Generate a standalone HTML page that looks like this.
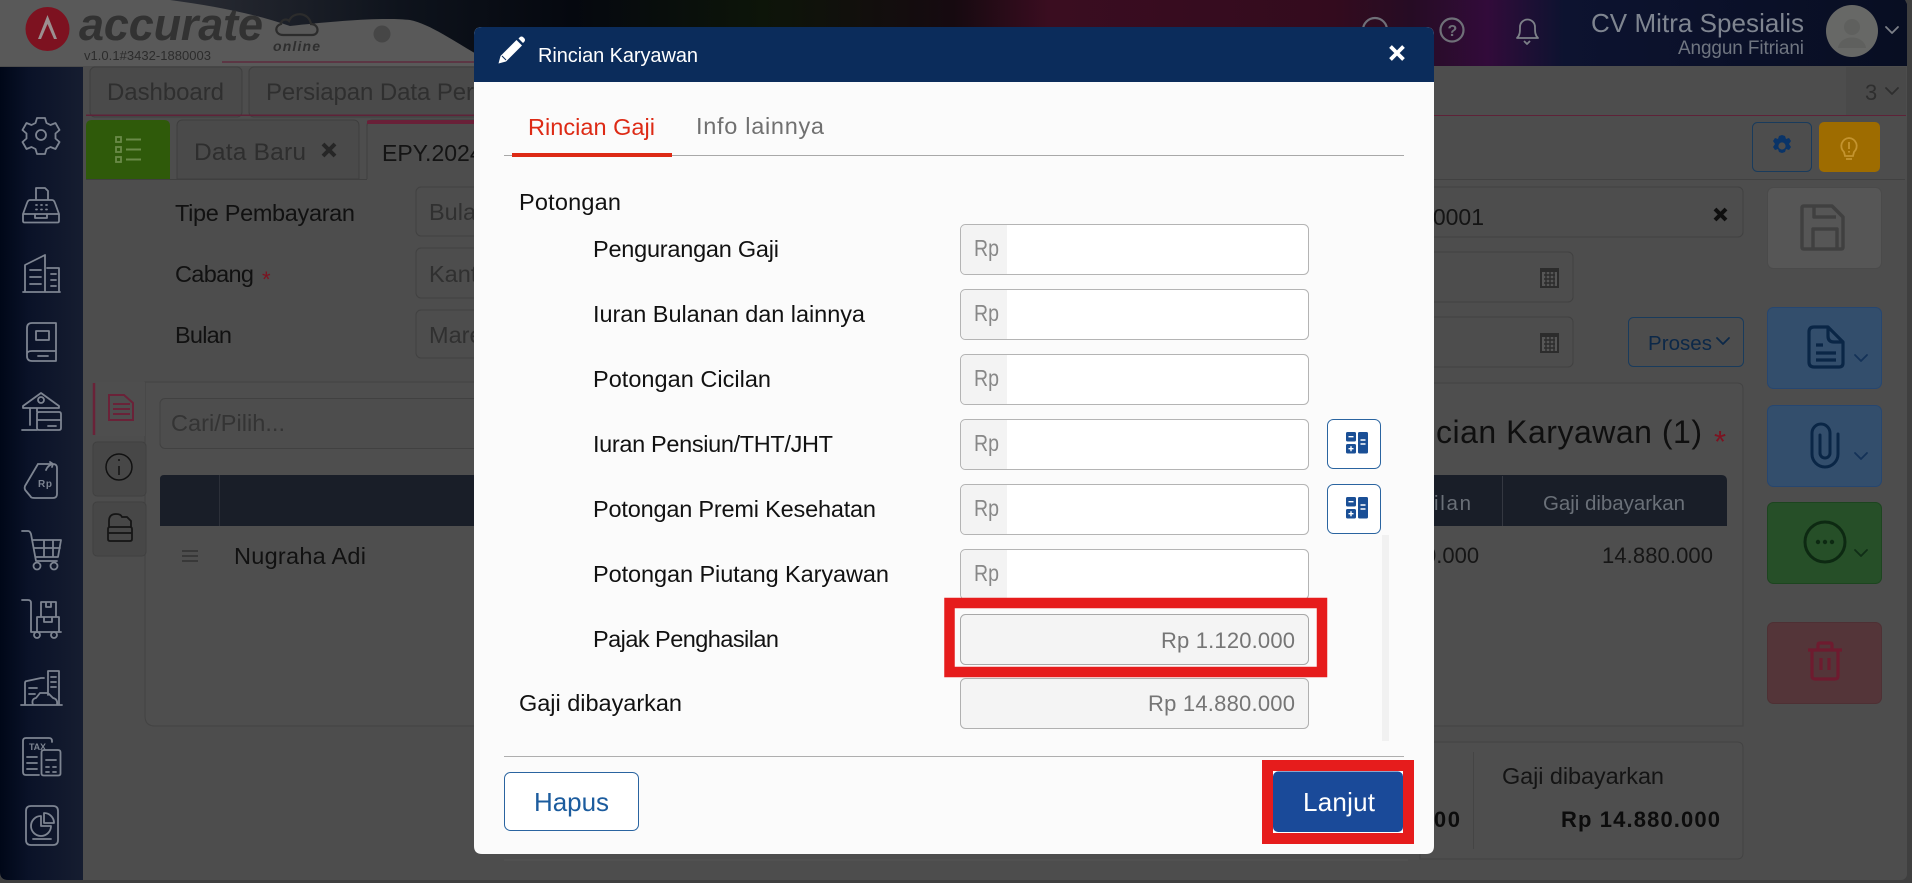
<!DOCTYPE html>
<html><head><meta charset="utf-8"><title>Rincian Karyawan</title>
<style>
html,body{margin:0;padding:0;width:1912px;height:883px;overflow:hidden;background:#3c3c3c}
svg{display:block}
text{font-family:"Liberation Sans",sans-serif;font-size:22px;fill:#1a1a1a}
.l{fill:#111;font-size:23.5px}
.rp{fill:#888;font-size:23px}
.ic{fill:none;stroke:#7d8491;stroke-width:1.8;stroke-linejoin:round;stroke-linecap:round}
.in{fill:#4d4d4d;stroke:#414141;stroke-width:1}
</style></head><body>
<svg width="1912" height="883" viewBox="0 0 1912 883" xmlns="http://www.w3.org/2000/svg">
<defs>
<linearGradient id="side" x1="0" x2="1" y1="0" y2="0"><stop offset="0" stop-color="#000718"/><stop offset=".35" stop-color="#0a1228"/><stop offset="1" stop-color="#161d30"/></linearGradient>
<linearGradient id="ban" x1="0" x2="1" y1="0" y2="0">
<stop offset="0" stop-color="#3a3c42"/><stop offset=".12" stop-color="#23262e"/><stop offset=".21" stop-color="#0e131c"/><stop offset=".3" stop-color="#05080f"/><stop offset=".4" stop-color="#0d1509"/><stop offset=".5" stop-color="#160a10"/><stop offset=".55" stop-color="#3a0d20"/><stop offset=".7" stop-color="#330b1e"/><stop offset=".74" stop-color="#260c24"/><stop offset=".78" stop-color="#320b3a"/><stop offset=".82" stop-color="#0d1330"/><stop offset="1" stop-color="#080e22"/></linearGradient>
<g id="calc"><rect x="0" y="0" width="10" height="9.5" rx="1.5" fill="#1a4f96"/><rect x="0" y="12" width="10" height="9.5" rx="1.5" fill="#1a4f96"/><rect x="12" y="0" width="10" height="21.5" rx="1.5" fill="#1a4f96"/><path d="M2.5 4.7h5M2.5 16.7h5M5 14.2v5M14.5 8h5M14.5 12h5" stroke="#fff" stroke-width="1.4" fill="none"/></g>
<path id="chev" d="M-6 -3l6 6 6-6" fill="none" stroke-width="1.8" stroke-linecap="round" stroke-linejoin="round"/>
</defs>

<!-- page base -->
<rect width="1912" height="883" fill="#3f3f3f"/>
<rect x="0" y="0" width="1907" height="880" rx="6" fill="#4d4d4d"/>

<!-- banner -->
<path d="M0 0H1905l2 4V66H0z" fill="url(#ban)"/>
<path d="M0 0H170C215 6 255 14 290 26C335 21 385 17 410 20C430 24 455 42 480 56L480 66H0z" fill="#595959"/>
<path d="M222 62H474" stroke="#5e2238" stroke-width="1.2"/>
<circle cx="382" cy="34" r="8.5" fill="#464646"/>
<!-- logo -->
<circle cx="47.5" cy="29" r="22" fill="#7d1220"/>
<path d="M38 39L47.5 15L57 39l-3 0-6.500-15-6.500 15z" fill="#9b9090"/>
<text x="79" y="40" textLength="184" style="font-size:45px;font-weight:bold;font-style:italic;fill:#323232">accurate</text>
<path d="M283 35c-8 0-9-9-2-11 0-4 5-6 8-3 4-10 20-9 22 3 8 0 9 11 1 11z" fill="none" stroke="#2c2c2c" stroke-width="2.2"/>
<text x="273" y="51" textLength="47" style="font-size:14px;font-weight:bold;font-style:italic;fill:#2f2f2f">online</text>
<text x="84" y="60" textLength="127" style="font-size:13px;fill:#2c2c2c">v1.0.1#3432-1880003</text>
<!-- banner right -->
<circle cx="1375" cy="30" r="12" fill="none" stroke="#6f7078" stroke-width="2.2"/>
<circle cx="1452" cy="30" r="11.5" fill="none" stroke="#6f7078" stroke-width="2.2"/>
<text x="1447.5" y="36" textLength="9" style="font-size:16px;font-weight:bold;fill:#6f7078">?</text>
<path d="M1517 38c3-3 3-6 3-11a7.500 7.500 0 0 1 15 0c0 5 0 8 3 11zM1524 41l3 3 3-3" fill="none" stroke="#7d8088" stroke-width="1.8" stroke-linejoin="round"/>
<text x="1591" y="32" textLength="213" style="font-size:26px;fill:#7f8590">CV Mitra Spesialis</text>
<text x="1678" y="54" textLength="126" style="font-size:19px;fill:#6f7580">Anggun Fitriani</text>
<circle cx="1852" cy="31" r="26" fill="#676866"/>
<circle cx="1852" cy="27" r="8" fill="#5f605e"/><path d="M1838 48c2-14 26-14 28 0z" fill="#5f605e"/>
<use href="#chev" x="1892" y="30" stroke="#7d8088"/>

<!-- sidebar -->
<path d="M0 67H83V880H8q-8 0-8-8z" fill="url(#side)"/>
<g class="ic">
<!-- gear -->
<path d="M37 118h8l1.500 5 4 2 5-2 4 7-4 3.500v5l4 3.500-4 7-5-2-4 2-1.500 5h-8l-1.500-5-4-2-5 2-4-7 4-3.500v-5l-4-3.500 4-7 5 2 4-2z"/><circle cx="41" cy="135" r="5"/>
<!-- fax -->
<path d="M36 200V188h9l3 3v9M30 200h22q2 0 3 3l4 11H23l4-11q1-3 3-3zM23 214h36v7q0 1.500-1.500 1.500h-33Q23 222.500 23 221zM35 214v4h12v-4M36 205h1M41 205h1M46 205h1M36 209.500h1M41 209.500h1M46 209.500h1"/>
<!-- building -->
<path d="M25 292V265l20-10v37M23 292h37M47 268h12v24M30 270h11M30 277h11M30 284h11M51 274h5M51 280h5M51 286h5"/>
<!-- book -->
<path d="M27 328q0-5 5-5h24v38H32q-5 0-5-5zM27 354q0-3 5-3h24M36 331h13v9H36zM38 356h10"/>
<!-- bank -->
<path d="M23 406l18-13 18 13v2H23zM30 408v17M37 408v4M22 430h15M39 412h20q2 0 2 2v14q0 2-2 2H39q-2 0-2-2v-14q0-2 2-2zM37 420h24M48 426h8"/><circle cx="41" cy="400" r="3"/>
<!-- tag rp -->
<path d="M38 464l-13 22q-1 3 1 5l5 6M38 464h15q4 0 4 4v26q0 4-4 4H35q-4 0-4-1M46 470q2-5 7-6M50 462l3 2-1 3"/>
<!-- cart -->
<path d="M22 531h6q2 0 3 3l5 27h21M32 540h29l-3 17H36M44 540v17M53 540v17M34 548h26"/><circle cx="37" cy="566" r="3.500"/><circle cx="54" cy="566" r="3.500"/>
<!-- trolley -->
<path d="M22 600h6q3 0 3 3v29h30M37 617h22v15H37zM41 602h15v15H41zM46 602v5h5v-5M44 617v5h8v-5"/><circle cx="37" cy="635" r="3"/><circle cx="54" cy="635" r="3"/>
<!-- buildings -->
<path d="M21 705h41M25 705v-22q0-2 2-2l14-3h3M48 695v-24h11v34M51 677h5M51 682h5M51 687h5M29 688h8M29 694h6M33 705q-2-6 3-7l4-5h8l5 5q5 1 4 7z"/>
<!-- tax -->
<path d="M52 742v-1q0-3-3-3H26q-3 0-3 3v31q0 3 3 3h13M44 750h14q2.500 0 2.500 2.500v21q0 2-2.500 2H44q-2.500 0-2.500-2v-21q0-2.500 2.500-2.500zM27 757h10M27 763h10M27 769h10M46 760h10M46 767h3M53 767h3M46 772h3M53 772h3"/>
<!-- report -->
<path d="M31 806h22q5 0 5 5v29q0 5-5 5H31q-5 0-5-5V811q0-5 5-5zM33 839h18M41 816a10 10 0 1 0 10 10H41zM44 813a10 10 0 0 1 10 10H44z"/>
</g>
<text x="29" y="750" textLength="17" style="font-size:9px;fill:#7d8491;font-weight:bold">TAX</text>
<text x="38" y="487" textLength="14" style="font-size:10px;fill:#7d8491;font-weight:bold">Rp</text>

<!-- top tabs -->
<rect x="90" y="67" width="152" height="50" rx="5" fill="#4a4a4a" stroke="#3f3f3f"/>
<rect x="249" y="67" width="400" height="50" rx="5" fill="#4a4a4a" stroke="#3f3f3f"/>
<text x="107" y="100" textLength="117" style="fill:#2f2f2f;font-size:24px">Dashboard</text>
<text x="266" y="100" textLength="208" style="fill:#2f2f2f;font-size:24px">Persiapan Data Per</text>
<rect x="1846" y="67" width="60" height="48" fill="#494949"/>
<text x="1865" y="100" textLength="13" style="fill:#2e2e2e;font-size:22px">3</text>
<use href="#chev" x="1892" y="91" stroke="#2e2e2e"/>
<rect x="86" y="114.500" width="388" height="1.500" fill="#5e2238"/>
<rect x="1434" y="115" width="472" height="1" fill="#5e2238"/>

<!-- second tabs -->
<path d="M86 179V126q0-6 6-6h72q6 0 6 6v53z" fill="#2f5a0a"/>
<g fill="none" stroke="#6a8a48" stroke-width="1.8"><rect x="116" y="137" width="5" height="5"/><rect x="116" y="147" width="5" height="5"/><rect x="116" y="157" width="5" height="5"/></g>
<path d="M126 139.500h15M126 149.500h15M126 159.500h15" stroke="#6a8a48" stroke-width="2"/>
<path d="M177 179V126q0-6 6-6h170q6 0 6 6v53z" fill="#4a4a4a" stroke="#3e3e3e"/>
<text x="194" y="160" textLength="112" style="fill:#2e2e2e;font-size:24.5px">Data Baru</text>
<path d="M323 144l12 12M335 144l-12 12" stroke="#262626" stroke-width="4"/>
<path d="M367 179V126q0-6 6-6H480V179" fill="#4d4d4d" stroke="#3e3e3e"/>
<path d="M367 124v-3q0-1 4-1H480v4z" fill="#692038"/>
<text x="382" y="161" style="fill:#141414;font-size:23px">EPY.2024</text>
<path d="M86 179.500H367" stroke="#3f3f3f"/>
<path d="M1434 179.500H1905" stroke="#414141"/>

<!-- form left -->
<text x="175" y="221" textLength="180" class="l">Tipe Pembayaran</text>
<text x="175" y="282" textLength="79" class="l">Cabang</text>
<text x="262" y="287" textLength="9" style="fill:#7d1220;font-size:22px">*</text>
<text x="175" y="343" textLength="57" class="l">Bulan</text>
<rect x="416" y="187" width="100" height="49" rx="5" class="in"/>
<rect x="416" y="248" width="100" height="50" rx="5" class="in"/>
<rect x="416" y="310" width="100" height="48" rx="5" class="in"/>
<text x="429" y="220" style="fill:#303030;font-size:23.5px">Bulanan</text>
<text x="429" y="282" style="fill:#303030;font-size:23.5px">Kantor</text>
<text x="429" y="343" style="fill:#303030;font-size:23.5px">Maret</text>

<!-- left detail panel -->
<path d="M145 382H480V726H155q-10 0-10-10z" fill="#4e4e4e" stroke="#434343"/>
<path d="M93 387q0-5 5-5h47v54H98q-5 0-5-5z" fill="#4e4e4e"/>
<path d="M94 383v52" stroke="#6a2238" stroke-width="2.5"/>
<path d="M109 395h15l9 8v17h-24zM113 404h17M113 409h17M113 414h17" fill="none" stroke="#6a2238" stroke-width="2"/>
<rect x="93" y="442" width="53" height="54" rx="4" fill="#474747" stroke="#404040"/>
<circle cx="119" cy="467" r="13" fill="none" stroke="#111" stroke-width="1.5"/><path d="M119 466v9M119 459v2" stroke="#111" stroke-width="1.5"/>
<rect x="93" y="502" width="53" height="54" rx="4" fill="#474747" stroke="#404040"/>
<path d="M108 539v-10q0-2 2-2h20q2 0 2 2v10q0 2-2 2h-20q-2 0-2-2zM108 533h24M109 527v-6q0-7 7-7 5 0 6 3h5l4 4v6" fill="none" stroke="#151515" stroke-width="1.8"/>
<rect x="160" y="398.500" width="330" height="50" rx="5" class="in"/>
<text x="171" y="431" textLength="114" style="fill:#343434;font-size:23.5px">Cari/Pilih...</text>
<path d="M160 526V479q0-4 4-4H480V526z" fill="#191e28"/>
<path d="M219.500 475V526" stroke="#2c3039"/>
<path d="M182 551h16M182 556h16M182 561h16" stroke="#383838" stroke-width="2"/>
<text x="234" y="564" textLength="132" class="l">Nugraha Adi</text>

<!-- right form -->
<rect x="1380" y="187" width="363" height="50" rx="5" class="in"/>
<rect x="1380" y="252" width="193" height="50" rx="5" class="in"/>
<rect x="1380" y="317" width="193" height="50" rx="5" class="in"/>
<text x="1484" y="225" text-anchor="end" style="fill:#141414;font-size:23px">000001</text>
<path d="M1715 209l11 11M1726 209l-11 11" stroke="#0f0f0f" stroke-width="4"/>
<g>
<rect x="1540" y="268" width="19" height="20" fill="#2c2c2c"/><rect x="1542" y="272" width="15" height="14" fill="#565656"/>
<path d="M1544 275h11M1544 279h11M1544 283h11M1546 272v14M1550 272v14M1554 272v14" stroke="#2c2c2c" stroke-width="1.4"/>
<rect x="1540" y="333" width="19" height="20" fill="#2c2c2c"/><rect x="1542" y="337" width="15" height="14" fill="#565656"/>
<path d="M1544 340h11M1544 344h11M1544 348h11M1546 337v14M1550 337v14M1554 337v14" stroke="#2c2c2c" stroke-width="1.4"/>
</g>
<rect x="1628.500" y="317.500" width="115" height="49" rx="5" fill="#4d4d4d" stroke="#193b5c"/>
<text x="1648" y="350" textLength="64" style="fill:#0c2848;font-size:20.5px">Proses</text>
<use href="#chev" x="1723" y="341" stroke="#0c2848"/>

<!-- top right buttons -->
<rect x="1752.500" y="122.500" width="59" height="49" rx="5" fill="#4d4d4d" stroke="#193b5c"/>
<path d="M1782 135l3 1 1 3 3-1 2 3-2 3 2 3-2 3-3-1-1 3-3 1-3-1-1-3-3 1-2-3 2-3-2-3 2-3 3 1 1-3z" fill="#0a3468"/><circle cx="1782" cy="146" r="3.6" fill="#4d4d4d"/>
<rect x="1819" y="122" width="61" height="50" rx="5" fill="#9e6c00"/>
<path d="M1849 138a8 8 0 0 0-5 14l1 4h8l1-4a8 8 0 0 0-5-14zM1846 159h6M1849 142v7M1849 151v1.500" fill="none" stroke="#c4942f" stroke-width="1.8"/>

<!-- side action buttons -->
<rect x="1767.500" y="187.500" width="114" height="81" rx="6" fill="#565656" stroke="#4a4a4a"/>
<path d="M1804 206h28l11 11v30q0 2-2 2h-37q-2 0-2-2v-39q0-2 2-2zM1814 206v11h22M1813 249v-20h24v20" fill="none" stroke="#404040" stroke-width="3.5" stroke-linejoin="round"/>
<rect x="1767.500" y="307.500" width="114" height="81" rx="6" fill="#334e6c" stroke="#264670"/>
<path d="M1814 327h14l15 15v21q0 4-4 4h-25q-5 0-5-5V332q0-5 5-5zM1828 327v9q0 6 6 6h9M1816 345h7M1816 353h20M1816 360h20" fill="none" stroke="#0a2646" stroke-width="3.2" stroke-linejoin="round"/>
<use href="#chev" x="1861" y="358" stroke="#143258"/>
<rect x="1767.500" y="405.500" width="114" height="81" rx="6" fill="#334e6c" stroke="#264670"/>
<path d="M1838 434v20a13 13 0 0 1-26 0v-21a9 9 0 0 1 18 0v20a5 5 0 0 1-10 0v-18" fill="none" stroke="#0a2646" stroke-width="3" stroke-linecap="round"/>
<use href="#chev" x="1861" y="456" stroke="#143258"/>
<rect x="1767.500" y="502.500" width="114" height="81" rx="6" fill="#264f28" stroke="#1c451f"/>
<circle cx="1825" cy="542" r="20" fill="none" stroke="#0d2912" stroke-width="3"/>
<circle cx="1818" cy="542" r="2.2" fill="#0d2912"/><circle cx="1825" cy="542" r="2.2" fill="#0d2912"/><circle cx="1832" cy="542" r="2.2" fill="#0d2912"/>
<use href="#chev" x="1861" y="553" stroke="#102e17"/>
<rect x="1767.500" y="622.500" width="114" height="81" rx="6" fill="#543539" stroke="#4e3034"/>
<path d="M1808 650h34M1818 650v-5q0-2 2-2h10q2 0 2 2v5M1812 650v26q0 3 3 3h20q3 0 3-3v-26M1821 658v12M1829 658v12" fill="none" stroke="#6e1b2f" stroke-width="3.2"/>

<!-- right table panel -->
<path d="M1420 383H1737q6 0 6 6V726H1420z" fill="#4e4e4e" stroke="#434343"/>
<text x="1436" y="443" textLength="266" style="font-size:32px;fill:#0f0f0f">cian Karyawan (1)</text>
<text x="1714" y="452" textLength="15" style="font-size:31px;fill:#7d1220">*</text>
<path d="M1420 475H1721q6 0 6 6V526H1420z" fill="#191e28"/>
<path d="M1502.500 476V526" stroke="#343841"/>
<text x="1434" y="510" textLength="37" style="fill:#6a7078;font-size:20.5px">ilan</text>
<text x="1543" y="510" textLength="142" style="fill:#6a7078;font-size:20.5px">Gaji dibayarkan</text>
<text x="1424" y="563" style="fill:#161616;font-size:22px">0.000</text>
<text x="1602" y="563" textLength="111" style="fill:#161616;font-size:22px">14.880.000</text>

<!-- totals panel -->
<path d="M1420 742H1737q6 0 6 6V853q0 6-6 6H1420z" fill="#4e4e4e" stroke="#434343"/>
<path d="M1473.500 752V849" stroke="#444"/>
<text x="1502" y="784" textLength="162" style="fill:#141414;font-size:23.5px">Gaji dibayarkan</text>
<text x="1561" y="827" textLength="159" style="fill:#0c0c0c;font-size:22px;font-weight:bold">Rp 14.880.000</text>
<text x="1420" y="827" textLength="40" style="fill:#0c0c0c;font-size:22px;font-weight:bold">000</text>
<path d="M504 860H1408" stroke="#555"/>

<!-- modal -->
<path d="M474 846V35q0-8 8-8H1426q8 0 8 8V846q0 8-8 8H482q-8 0-8-8z" fill="#fbfbfb"/>
<path d="M474 82V35q0-8 8-8H1426q8 0 8 8V82z" fill="#0b2c5b"/>
<path d="M498.500 63.500l2-7.500 16-16 5.500 5.500-16 16zM518.500 38.500l1.500-1.500q1.500-1 3 0l1.500 1.500q1 1.500 0 3l-1.500 1.500z" fill="#fff"/>
<path d="M502 56l4 4" stroke="#0b2c5b" stroke-width="1"/>
<text x="538" y="62" textLength="160" style="font-size:20px;fill:#fff">Rincian Karyawan</text>
<path d="M1390.500 46.500l13 13M1403.500 46.500l-13 13" stroke="#fff" stroke-width="3.8"/>

<!-- modal tabs -->
<text x="528" y="135" textLength="127" style="fill:#dd2a15;font-size:23.5px">Rincian Gaji</text>
<text x="696" y="134" textLength="128" style="fill:#707070;font-size:23.5px">Info lainnya</text>
<rect x="504" y="155" width="900" height="1" fill="#a8a8a8"/>
<path d="M512 153H672V157H512z" fill="#dd2a15"/>

<text x="519" y="210" textLength="102" class="l">Potongan</text>
<text x="593" y="257" textLength="186" class="l">Pengurangan Gaji</text>
<text x="593" y="322" textLength="272" class="l">Iuran Bulanan dan lainnya</text>
<text x="593" y="387" textLength="178" class="l">Potongan Cicilan</text>
<text x="593" y="452" textLength="240" class="l">Iuran Pensiun/THT/JHT</text>
<text x="593" y="517" textLength="283" class="l">Potongan Premi Kesehatan</text>
<text x="593" y="582" textLength="296" class="l">Potongan Piutang Karyawan</text>
<text x="593" y="647" textLength="186" class="l">Pajak Penghasilan</text>
<text x="519" y="711" textLength="163" class="l">Gaji dibayarkan</text>

<!-- input rows -->
<g fill="#fff" stroke="#b4b4b4">
<rect x="960.500" y="224.500" width="348" height="50" rx="5"/>
<rect x="960.500" y="289.500" width="348" height="50" rx="5"/>
<rect x="960.500" y="354.500" width="348" height="50" rx="5"/>
<rect x="960.500" y="419.500" width="348" height="50" rx="5"/>
<rect x="960.500" y="484.500" width="348" height="50" rx="5"/>
<rect x="960.500" y="549.500" width="348" height="50" rx="5"/>
</g>
<g fill="#f3f3f3">
<path d="M961 230q0-5 5-5h41v49h-41q-5 0-5-5z"/>
<path d="M961 295q0-5 5-5h41v49h-41q-5 0-5-5z"/>
<path d="M961 360q0-5 5-5h41v49h-41q-5 0-5-5z"/>
<path d="M961 425q0-5 5-5h41v49h-41q-5 0-5-5z"/>
<path d="M961 490q0-5 5-5h41v49h-41q-5 0-5-5z"/>
<path d="M961 555q0-5 5-5h41v49h-41q-5 0-5-5z"/>
</g>
<text x="974" y="256" textLength="25" lengthAdjust="spacingAndGlyphs" class="rp">Rp</text>
<text x="974" y="321" textLength="25" lengthAdjust="spacingAndGlyphs" class="rp">Rp</text>
<text x="974" y="386" textLength="25" lengthAdjust="spacingAndGlyphs" class="rp">Rp</text>
<text x="974" y="451" textLength="25" lengthAdjust="spacingAndGlyphs" class="rp">Rp</text>
<text x="974" y="516" textLength="25" lengthAdjust="spacingAndGlyphs" class="rp">Rp</text>
<text x="974" y="581" textLength="25" lengthAdjust="spacingAndGlyphs" class="rp">Rp</text>

<rect x="1327.500" y="419.500" width="53" height="49" rx="6" fill="#fff" stroke="#2a64a0"/>
<use href="#calc" x="1346" y="432"/>
<rect x="1327.500" y="484.500" width="53" height="49" rx="6" fill="#fff" stroke="#2a64a0"/>
<use href="#calc" x="1346" y="497"/>
<rect x="1382" y="535" width="7" height="206" fill="#f1f1f1"/>

<rect x="960.500" y="614.500" width="348" height="50" rx="5" fill="#f4f4f4" stroke="#a8a8a8"/>
<text x="1161" y="648" textLength="134" style="fill:#757575">Rp 1.120.000</text>
<rect x="960.500" y="678.500" width="348" height="50" rx="5" fill="#f4f4f4" stroke="#b0b0b0"/>
<text x="1148" y="711" textLength="147" style="fill:#757575">Rp 14.880.000</text>
<rect x="949.500" y="603" width="372.500" height="69" fill="none" stroke="#e61c1c" stroke-width="10.5"/>

<!-- footer -->
<rect x="504" y="756" width="900" height="1" fill="#aeaeae"/>
<rect x="504.500" y="772.500" width="134" height="58" rx="6" fill="#fff" stroke="#2a64a0"/>
<text x="534" y="811" textLength="75" style="font-size:26px;fill:#1c5c9e">Hapus</text>
<rect x="1267.500" y="765.500" width="141" height="73" fill="#fff" stroke="#e61c1c" stroke-width="11"/>
<rect x="1273" y="771.500" width="130" height="60.500" rx="5" fill="#1a4a99"/>
<text x="1303" y="811" textLength="72" style="font-size:26px;fill:#fff">Lanjut</text>
</svg>
</body></html>
